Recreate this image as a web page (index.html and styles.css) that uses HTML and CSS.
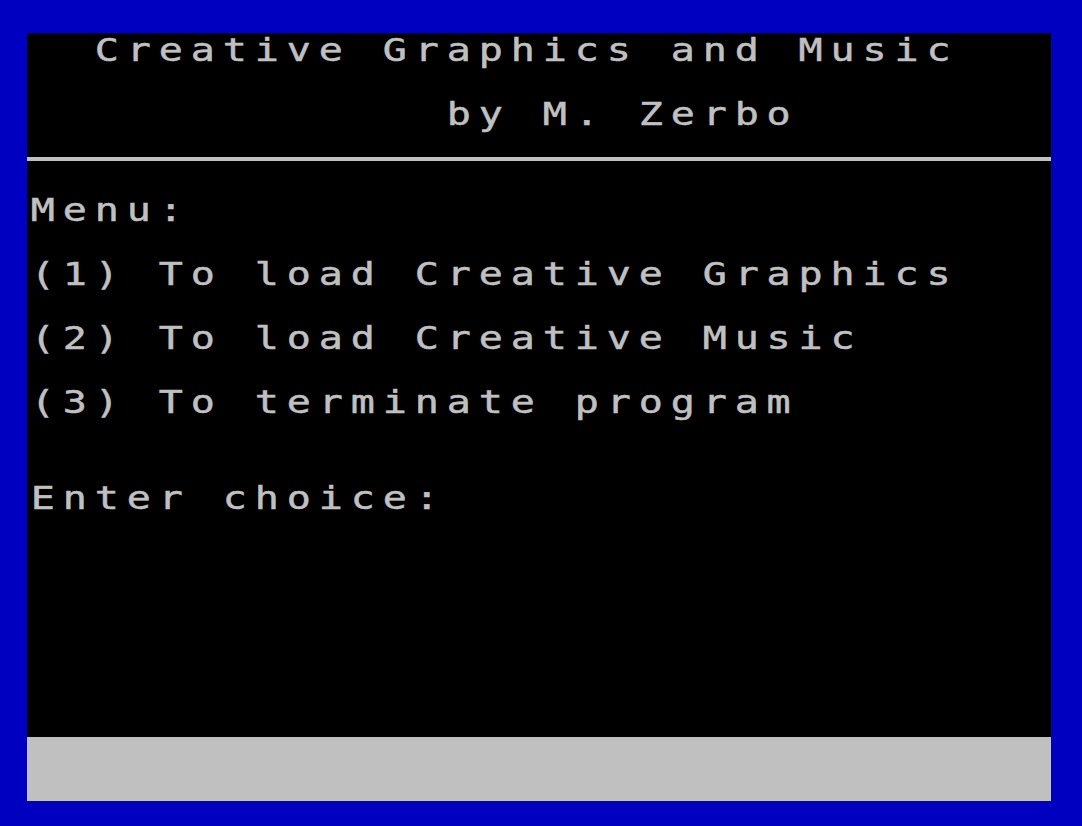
FILE: index.html
```html
<!DOCTYPE html>
<html lang="en">
<head>
    <meta charset="UTF-8">
    <meta name="viewport" content="width=device-width, initial-scale=1.0">
    <title>Creative Graphics and Music</title>
    <link rel="stylesheet" href="styles.css">
</head>
<body>
    <div class="screen">
        <div class="display">
            <div class="header">
                <div class="row">  Creative Graphics and Music</div>
                <div class="row subtitle">             by M. Zerbo</div>
            </div>
            <div class="rule"></div>

            <div class="menu">
                <div class="row">Menu:</div>
                <div class="row">(1) To load Creative Graphics</div>
                <div class="row">(2) To load Creative Music</div>
                <div class="row">(3) To terminate program</div>
            </div>

            <div class="row prompt">Enter choice:</div>
        </div>
        <div class="status"></div>
    </div>
</body>
</html>
```

FILE: styles.css
```css
body {
    margin: 0;
    background-color: #0000c0;
    overflow: hidden;
}
.screen {
    width: 1024px;
    margin: 33px 0 0 27px;
}
.display {
    height: 704px;
    background-color: #000;
    display: flex;
    flex-direction: column;
}
/* one text line = one 32px character row; glyphs widened to the wide pixel-font look */
.row {
    width: 80%;
    box-sizing: border-box;
    height: 32px;
    line-height: 34px;
    padding-left: 3px;
    font-family: 'DejaVu Sans Mono', 'Liberation Mono', monospace;
    font-size: 32px;
    letter-spacing: 6.33px;
    white-space: pre;
    color: #c0c0c0;
    -webkit-text-stroke: 0.5px #c0c0c0;
    transform: scaleX(1.25);
    transform-origin: left center;
}
.subtitle {
    margin-top: 32px;
}
.rule {
    height: 28px;
    border-bottom: 4px solid #c0c0c0;
}
.menu {
    padding-top: 32px;
    display: flex;
    flex-direction: column;
    gap: 32px;
}
.prompt {
    margin-top: 64px;
}
.status {
    height: 64px;
    background-color: #c0c0c0;
}
```
